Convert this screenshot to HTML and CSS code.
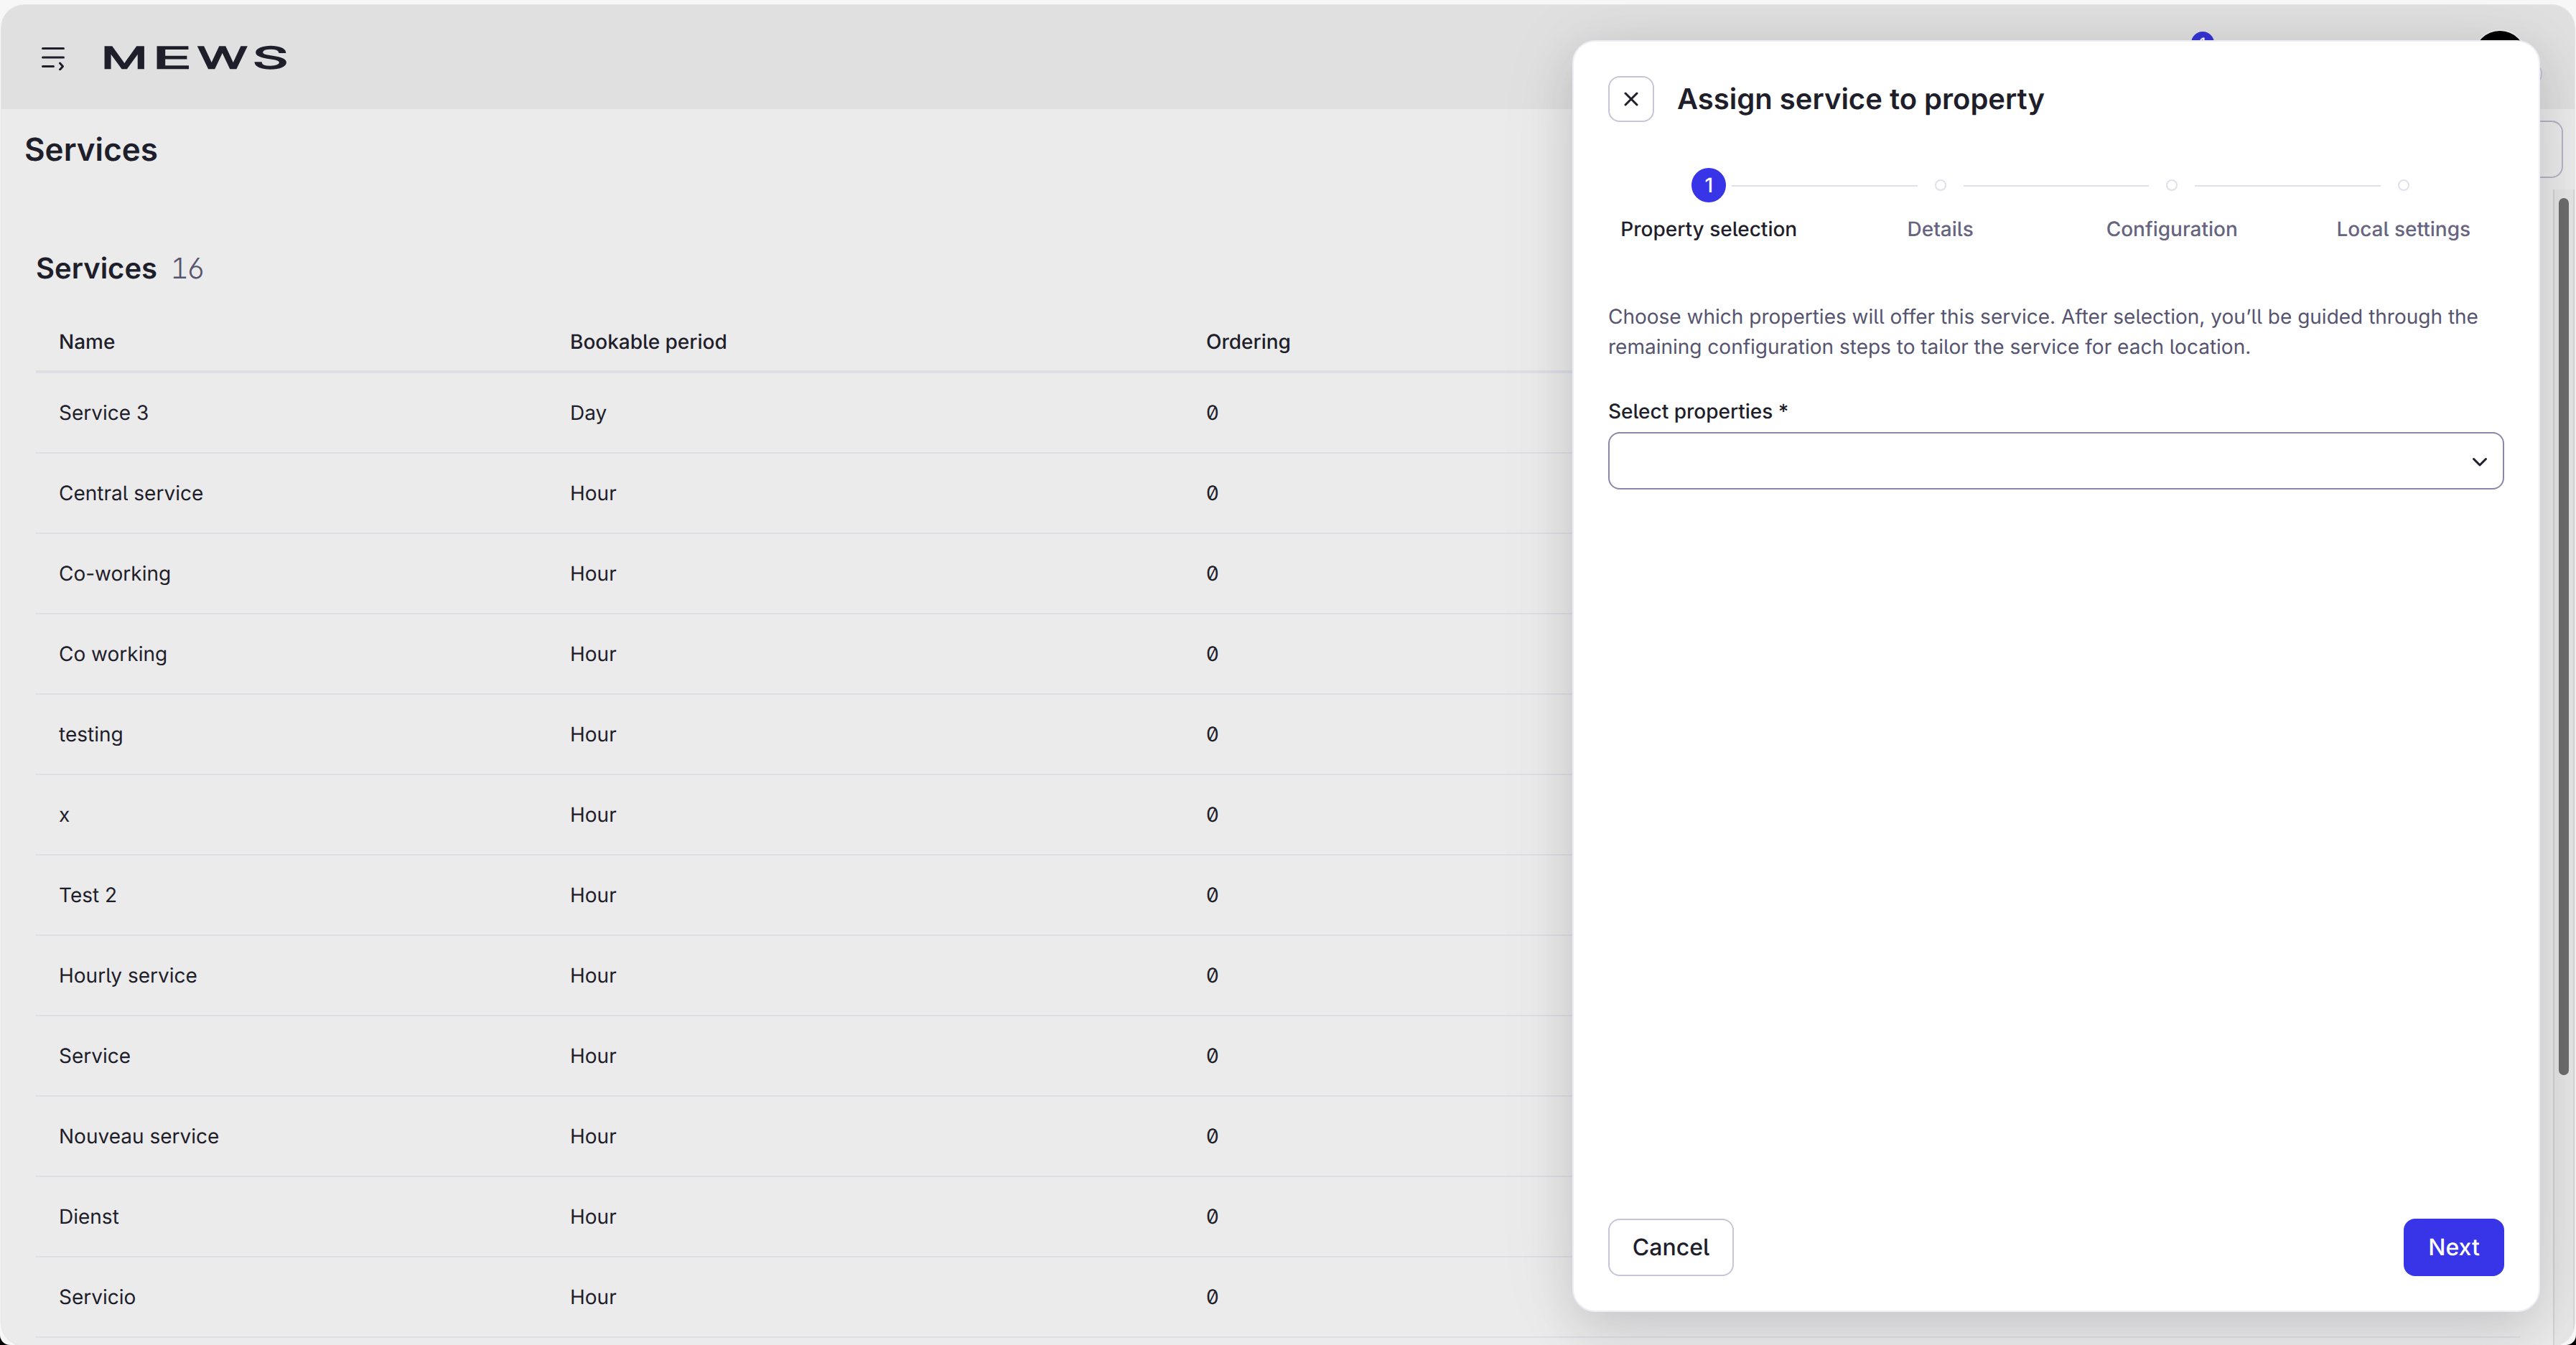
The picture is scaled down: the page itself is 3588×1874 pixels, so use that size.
FILE: index.html
```html
<!DOCTYPE html>
<html lang="en">
<head>
  <meta charset="UTF-8" />
  <meta name="viewport" content="width=device-width, initial-scale=1.0"/>
  <title>Services</title>
  <link rel="stylesheet" href="styles.css">
</head>
<body>
  <div class="frame">
    <div class="window">
      <header class="topbar">
        <svg class="menu-icon" width="36" height="36" viewBox="0 0 36 36">
          <path d="M5.500 5.500h29M5.500 18h29M5.500 30.500h15M29.500 26l4 4.500-4 4.500"/>
        </svg>
        <svg class="logo" width="270" height="72" viewBox="0 0 270 72" aria-label="Mews">
          <text x="0.8" y="50.8" textLength="65" lengthAdjust="spacingAndGlyphs">M</text>
          <text x="72.500" y="50.8" textLength="54" lengthAdjust="spacingAndGlyphs">E</text>
          <text x="135.500" y="50.8" textLength="68.5" lengthAdjust="spacingAndGlyphs">W</text>
          <text x="212" y="50.8" textLength="49.6" lengthAdjust="spacingAndGlyphs">S</text>
        </svg>
        <div class="account">
          <span class="badge">1</span>
          <span class="avatar"><span class="avatar-status"></span></span>
        </div>
      </header>

      <div class="page-head">
        <h1>Services</h1>
        <button class="page-action" aria-label="Actions"></button>
      </div>

      <div class="page-body">
        <main class="content">
          <h2>Services <span class="count">16</span></h2>
          <div class="table">
            <div class="row row-head"><span>Name</span><span>Bookable period</span><span>Ordering</span></div>
            <div class="row"><span>Service 3</span><span>Day</span><span>0</span></div>
            <div class="row"><span>Central service</span><span>Hour</span><span>0</span></div>
            <div class="row"><span>Co-working</span><span>Hour</span><span>0</span></div>
            <div class="row"><span>Co working</span><span>Hour</span><span>0</span></div>
            <div class="row"><span>testing</span><span>Hour</span><span>0</span></div>
            <div class="row"><span>x</span><span>Hour</span><span>0</span></div>
            <div class="row"><span>Test 2</span><span>Hour</span><span>0</span></div>
            <div class="row"><span>Hourly service</span><span>Hour</span><span>0</span></div>
            <div class="row"><span>Service</span><span>Hour</span><span>0</span></div>
            <div class="row"><span>Nouveau service</span><span>Hour</span><span>0</span></div>
            <div class="row"><span>Dienst</span><span>Hour</span><span>0</span></div>
            <div class="row"><span>Servicio</span><span>Hour</span><span>0</span></div>
          </div>
        </main>
        <div class="scrollbar"><div class="thumb"></div></div>
      </div>

      <aside class="drawer">
        <div class="drawer-head">
          <button class="close" aria-label="Close">
            <svg width="20" height="20" viewBox="0 0 20 20"><path d="M2 2l16 16M18 2L2 18"/></svg>
          </button>
          <h3>Assign service to property</h3>
        </div>

        <div class="stepper">
          <div class="step active">
            <div class="marker"><span class="circle">1</span></div>
            <div class="step-label">Property selection</div>
          </div>
          <div class="step">
            <div class="marker"><span class="dot"></span></div>
            <div class="step-label">Details</div>
          </div>
          <div class="step">
            <div class="marker"><span class="dot"></span></div>
            <div class="step-label">Configuration</div>
          </div>
          <div class="step">
            <div class="marker"><span class="dot"></span></div>
            <div class="step-label">Local settings</div>
          </div>
        </div>

        <div class="drawer-body">
          <p>Choose which properties will offer this service. After selection, you’ll be guided through the<br>remaining configuration steps to tailor the service for each location.</p>
          <div class="field-label">Select properties *</div>
          <div class="select">
            <svg width="24" height="16" viewBox="0 0 24 16"><path d="M3.500 3.500l8.500 8.500 8.500-8.500"/></svg>
          </div>
        </div>

        <div class="drawer-foot">
          <button class="btn cancel">Cancel</button>
          <button class="btn next">Next</button>
        </div>
      </aside>
    </div>
  </div>
</body>
</html>
```
FILE: styles.css
```css
* {
  box-sizing: border-box;
}

html {
  background-color: #000;
}

body {
  margin: 0;
  font-family: Inter, sans-serif;
  font-size: 28px;
  line-height: 42px;
  color: #1f1e2b;
  font-feature-settings: 'ss02', 'cv03';
  text-rendering: geometricPrecision;
}

h1, h2, h3, p {
  margin: 0;
}

button {
  font: inherit;
  color: inherit;
  font-feature-settings: inherit;
  text-rendering: inherit;
  padding: 0;
}

.frame {
  height: 1874px;
  padding: 7px 2px 0;
  background-color: #f7f7f7;
  border-radius: 0 0 14px 14px;
  overflow: hidden;
}

.window {
  position: relative;
  display: flex;
  flex-direction: column;
  height: 1868px;
  background-color: #ebebeb;
  border-radius: 32px;
  box-shadow: 0 0 0 1px #e4e4e4;
  overflow: hidden;
}

.topbar {
  display: flex;
  flex: none;
  align-items: center;
  height: 145px;
  padding: 0 66px 0 52px;
  background-color: #e0e0e0;
}

.menu-icon {
  margin-top: 1px;
  fill: none;
  stroke: #1f1e2b;
  stroke-width: 3;
  stroke-linecap: round;
  stroke-linejoin: round;
}

.logo {
  margin: 1px 0 0 50px;
}

.logo text {
  font-size: 40.7px;
  font-weight: 300;
  fill: #1f1e2b;
  stroke: #1f1e2b;
  stroke-width: 2.4px;
}

.account {
  display: flex;
  gap: 360px;
  margin: -1px 0 0 auto;
}

.badge {
  width: 32px;
  height: 32px;
  margin-top: 3px;
  border-radius: 50%;
  background-color: #3634d4;
  color: #fff;
  font-size: 20px;
  font-weight: 500;
  line-height: 32px;
  text-align: center;
}

.avatar {
  position: relative;
  width: 76px;
  height: 76px;
  border: 2px solid #ebebeb;
  border-radius: 50%;
  background-color: #000;
}

.avatar-status {
  position: absolute;
  top: 44px;
  left: 63px;
  width: 32px;
  height: 32px;
  border: 2px solid #c4c2d4;
  border-radius: 50%;
  background-color: #ebebeb;
}

.page-head {
  display: flex;
  flex: none;
  align-items: center;
  justify-content: space-between;
  height: 112px;
  padding: 0 16px 0 32px;
}

.page-head h1 {
  font-size: 44px;
  font-weight: 600;
}

.page-action {
  width: 220px;
  height: 80px;
  border: 2px solid #b5b3c6;
  border-radius: 16px;
  background: none;
}

.page-body {
  display: flex;
  flex: 1;
  min-height: 0;
}

.content {
  flex: 1;
  padding: 89px 46px 0 48px;
}

.content h2 {
  font-size: 40px;
  font-weight: 600;
  line-height: 42px;
  margin-bottom: 37px;
}

.count {
  margin-left: 8px;
  font-weight: 300;
  letter-spacing: -3px;
  font-feature-settings: 'tnum', 'cv03';
  color: #56546f;
}

.row {
  display: grid;
  grid-template-columns: 712px 886px 1fr;
  align-items: center;
  height: 112px;
  padding: 0 32px;
  border-bottom: 2px solid #dedee5;
}

.row-head {
  height: 88px;
  padding-top: 4px;
  border-bottom-width: 4px;
  font-weight: 500;
}

.scrollbar {
  width: 30px;
  padding: 12px 6px;
  border-left: 2px solid #d2d2d2;
  border-right: 2px solid #d8d8d8;
  background-color: #e6e6e6;
}

.thumb {
  width: 14px;
  height: 1222px;
  border-radius: 7px;
  background-color: #6d6d6d;
}

/* drawer floats over the page */
.drawer {
  position: absolute;
  top: 49px;
  left: 2188px;
  display: flex;
  flex-direction: column;
  width: 1348px;
  height: 1772px;
  padding: 48px 0;
  border: 2px solid #ededf4;
  border-radius: 32px;
  background-color: #fff;
  box-shadow: 0 24px 64px rgba(30, 30, 40, 0.13), 0 4px 120px rgba(30, 30, 40, 0.07);
}

.drawer-head {
  display: flex;
  align-items: center;
  gap: 32px;
  padding: 0 48px;
}

.drawer-head h3 {
  font-size: 40px;
  font-weight: 600;
}

.close {
  display: flex;
  align-items: center;
  justify-content: center;
  width: 64px;
  height: 64px;
  border: 2px solid #c7c5d9;
  border-radius: 16px;
  background: none;
}

.close path,
.select path {
  fill: none;
  stroke: #1f1e2b;
  stroke-width: 3;
  stroke-linecap: round;
  stroke-linejoin: round;
}

.stepper {
  display: flex;
  margin: 64px 27px 80px;
}

.step {
  flex: 1;
}

.marker {
  display: flex;
  align-items: center;
  justify-content: center;
  height: 48px;
}

.circle {
  width: 48px;
  height: 48px;
  border-radius: 50%;
  background-color: #3834e8;
  color: #fff;
  font-weight: 500;
  line-height: 48px;
  text-align: center;
}

.dot {
  width: 16px;
  height: 16px;
  border: 2px solid #e0dfeb;
  border-radius: 50%;
}

/* connectors on both sides of each marker */
.marker::before,
.marker::after {
  content: '';
  flex: 1;
  height: 2px;
  margin-top: 2px;
  background-color: #e0dfeb;
}

.marker::before {
  margin-right: 24px;
}

.marker::after {
  margin-left: 24px;
}

.step.active .marker::before {
  margin-right: 8px;
}

.step.active .marker::after {
  margin-left: 8px;
}

.step:first-child .marker::before,
.step:last-child .marker::after {
  visibility: hidden;
}

.step-label {
  margin-top: 16px;
  font-weight: 500;
  text-align: center;
  color: #66647f;
}

.step.active .step-label {
  color: #1f1e2b;
}

.drawer-body {
  flex: 1;
  padding: 0 48px;
}

.drawer-body p {
  margin-bottom: 48px;
  white-space: nowrap;
  color: #56546f;
}

.field-label {
  font-weight: 500;
}

.select {
  display: flex;
  align-items: center;
  justify-content: flex-end;
  height: 80px;
  margin-top: 8px;
  padding: 4px 20px 0;
  border: 2px solid #8a88a9;
  border-radius: 16px;
}

.drawer-foot {
  display: flex;
  justify-content: space-between;
  padding: 0 48px;
}

.btn {
  height: 80px;
  border-radius: 16px;
  font-size: 32px;
  font-weight: 500;
}

.cancel {
  width: 175px;
  border: 2px solid #c7c5d9;
  background-color: #fff;
}

.next {
  width: 140px;
  border: none;
  background-color: #3834e8;
  color: #fff;
}
```
